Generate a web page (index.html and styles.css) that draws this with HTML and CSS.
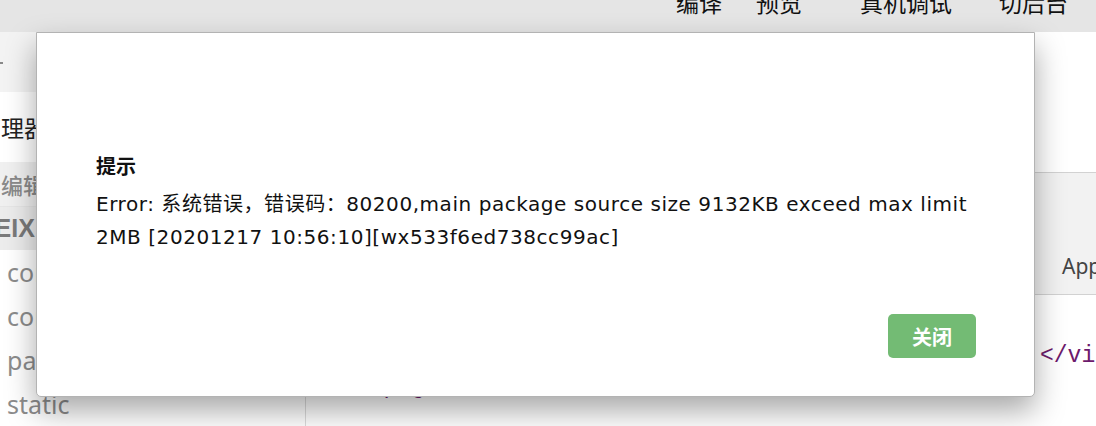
FILE: index.html
```html
<!DOCTYPE html>
<html lang="zh-CN">
<head>
<meta charset="utf-8">
<title>提示</title>
<link rel="stylesheet" href="styles.css">
</head>
<body>
<div class="app">
  <header class="toolbar">
    <span class="tool t-compile">编译</span>
    <span class="tool t-preview">预览</span>
    <span class="tool t-remote">真机调试</span>
    <span class="tool t-bg">切后台</span>
  </header>
  <main class="main">
    <aside class="sidebar">
      <div class="side-head"><span class="dot"></span></div>
      <div class="side-title"><span class="clip-left">资源管理器</span></div>
      <div class="side-section">编辑器</div>
      <div class="side-project"><span class="clip-project">WEIXIN</span></div>
      <ul class="files">
        <li>components</li>
        <li>common</li>
        <li>pages</li>
        <li>static</li>
      </ul>
    </aside>
    <section class="editor">
      <div class="editor-top"></div>
      <div class="tabbar"><span class="tab">App.vue</span></div>
      <div class="code">
        <div class="code-line l1"><span class="tag">&lt;/view&gt;</span></div>
        <div class="code-line l2"><span class="tag">&lt;/page&gt;</span></div>
      </div>
    </section>
  </main>

  <div class="dialog" role="dialog">
    <div class="dialog-body">
      <div class="dialog-title">提示</div>
      <div class="dialog-msg">Error: 系统错误，错误码：80200,main package source size 9132KB exceed max limit<br>2MB [20201217 10:56:10][wx533f6ed738cc99ac]</div>
    </div>
    <div class="dialog-foot">
      <button class="btn-close">关闭</button>
    </div>
  </div>
</div>
</body>
</html>
```

FILE: styles.css
```css
html, body {
  margin: 0;
  padding: 0;
  background: #ffffff;
}
body {
  width: 1096px;
  height: 426px;
  overflow: hidden;
  font-family: "Liberation Sans", "Noto Sans CJK SC", sans-serif;
}
.app {
  position: relative;
  width: 1096px;
  height: 426px;
  display: flex;
  flex-direction: column;
  overflow: hidden;
}

/* toolbar */
.toolbar {
  height: 32px;
  flex: none;
  background: #e5e5e5;
  display: flex;
  align-items: flex-start;
  overflow: hidden;
}
.tool {
  font-family: "Noto Sans CJK SC", sans-serif;
  font-size: 23px;
  line-height: 23px;
  color: #111;
  margin-top: -9px;
  white-space: nowrap;
}
.t-compile { margin-left: 676px; }
.t-preview { margin-left: 34px; }
.t-remote { margin-left: 58px; }
.t-bg { margin-left: 47px; }

/* main */
.main {
  flex: 1;
  display: flex;
  min-height: 0;
}
.sidebar {
  width: 305px;
  flex: none;
  border-right: 1px solid #dcdcdc;
  display: flex;
  flex-direction: column;
  overflow: hidden;
}
.side-head {
  height: 60px;
  background: #f3f3f3;
  display: flex;
  align-items: center;
}
.dot {
  width: 3px;
  height: 2px;
  background: #888;
  margin-top: 2px;
}
.side-title {
  height: 70px;
  display: flex;
  align-items: center;
  overflow: hidden;
  font-family: "Noto Sans CJK SC", sans-serif;
  font-size: 23px;
  color: #222;
}
.clip-left {
  margin-left: -68px;
  white-space: nowrap;
}
.side-section {
  height: 44px;
  background: #f0f0f0;
  border-bottom: 1px solid #e6e6e6;
  display: flex;
  align-items: center;
  font-family: "Noto Sans CJK SC", sans-serif;
  font-size: 22px;
  font-weight: 500;
  color: #8a8a8a;
  padding-left: 1px;
}
.side-project {
  height: 43px;
  background: #ececec;
  display: flex;
  align-items: center;
  overflow: hidden;
  font-size: 25px;
  font-weight: bold;
  color: #7a7a7a;
}
.clip-project {
  margin-left: -29px;
  white-space: nowrap;
}
.files {
  list-style: none;
  margin: 0;
  padding: 0;
}
.files li {
  height: 44px;
  line-height: 44px;
  padding-left: 7px;
  font-family: "Noto Sans", sans-serif;
  font-size: 25px;
  color: #8c8c8c;
  white-space: nowrap;
}

/* editor */
.editor {
  flex: 1;
  display: flex;
  flex-direction: column;
  min-width: 0;
}
.editor-top {
  height: 140px;
  background: #ffffff;
}
.tabbar {
  height: 123px;
  box-sizing: border-box;
  background: #f2f2f2;
  border-top: 1px solid #d2d2d2;
  border-bottom: 1px solid #d2d2d2;
  display: flex;
  align-items: flex-end;
  padding-bottom: 14px;
}
.tab {
  margin-left: 756px;
  font-family: "Noto Sans", sans-serif;
  font-size: 21px;
  color: #444;
  white-space: nowrap;
}
.code {
  flex: 1;
  background: #fff;
  padding-top: 46px;
  font-family: "Liberation Mono", monospace;
  font-size: 23px;
  color: #6c1a6c;
}
.code-line {
  height: 31px;
  line-height: 31px;
  white-space: nowrap;
}
.l1 { padding-left: 734px; }
.l2 { padding-left: 50px; }

/* dialog */
.dialog {
  position: absolute;
  left: 36px;
  top: 32px;
  width: 999px;
  height: 365px;
  box-sizing: border-box;
  background: #ffffff;
  border: 1px solid #b3b3b3;
  border-radius: 0 0 5px 5px;
  box-shadow: 0 14px 30px rgba(0, 0, 0, 0.34);
  padding: 118px 58px 0 59px;
  display: flex;
  flex-direction: column;
}
.dialog-title {
  font-family: "DejaVu Sans", "Noto Sans CJK SC", sans-serif;
  font-weight: bold;
  font-size: 20px;
  line-height: 33px;
  color: #111;
  margin-bottom: 4px;
}
.dialog-msg {
  font-family: "DejaVu Sans", "Noto Sans CJK SC", sans-serif;
  font-size: 20px;
  letter-spacing: 0.55px;
  line-height: 33px;
  color: #111;
  white-space: nowrap;
}
.dialog-foot {
  display: flex;
  justify-content: flex-end;
  margin-top: 60px;
}
.btn-close {
  width: 88px;
  height: 44px;
  border: none;
  border-radius: 5px;
  background: #73bb74;
  color: #ffffff;
  font-family: "Noto Sans CJK SC", sans-serif;
  font-weight: bold;
  font-size: 20px;
  padding: 0;
}
```
